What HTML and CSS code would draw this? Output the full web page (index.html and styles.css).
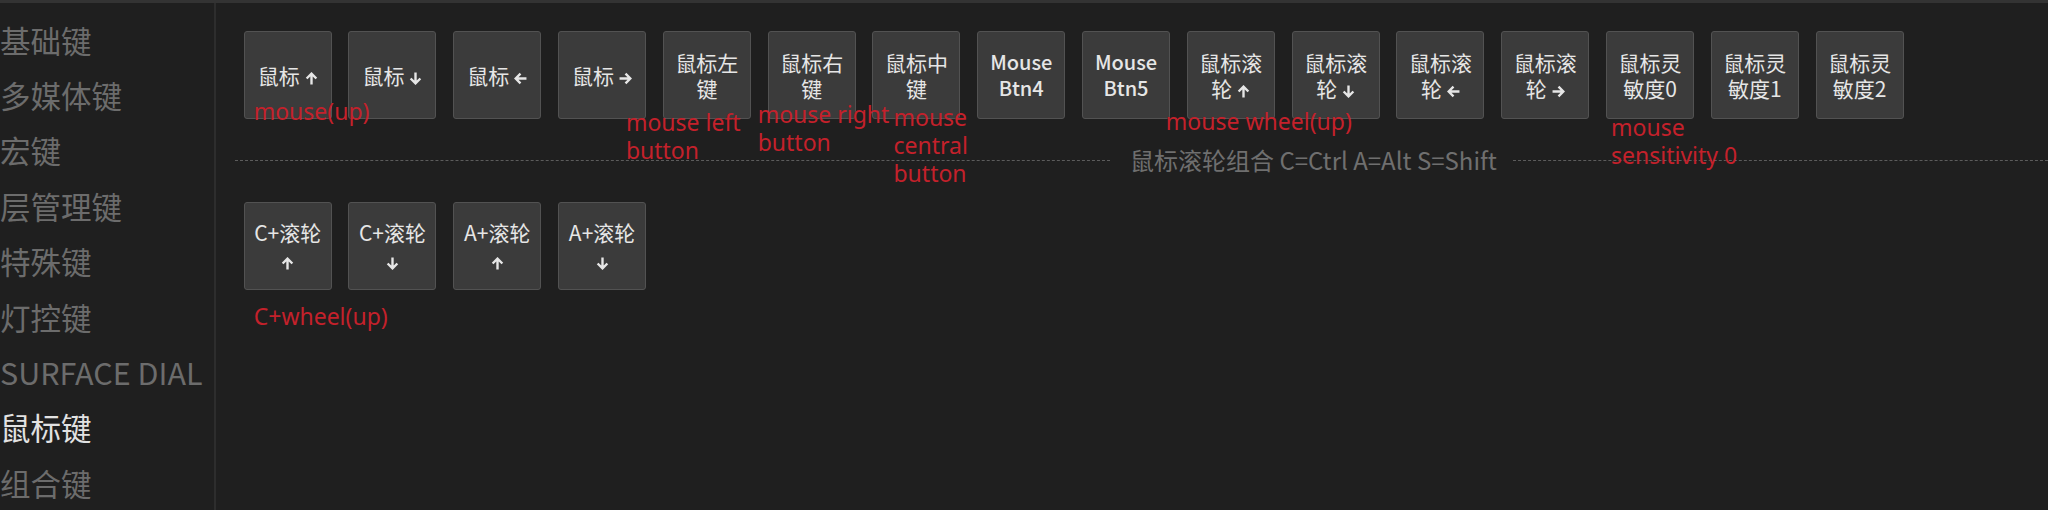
FILE: index.html
```html
<!DOCTYPE html>
<html lang="zh-CN">
<head>
<meta charset="utf-8">
<title>鼠标键</title>
<link rel="stylesheet" href="styles.css">
</head>
<body>
<div class="app">
  <aside class="sidebar">
    <div class="nav-item">基础键</div>
    <div class="nav-item">多媒体键</div>
    <div class="nav-item">宏键</div>
    <div class="nav-item">层管理键</div>
    <div class="nav-item">特殊键</div>
    <div class="nav-item">灯控键</div>
    <div class="nav-item">SURFACE DIAL</div>
    <div class="nav-item active">鼠标键</div>
    <div class="nav-item">组合键</div>
  </aside>
  <main class="content">
    <div class="keys">
      <div class="key"><span class="label">鼠标<svg class="arr" viewBox="0 0 12 12"><path d="M6 11.5V1.5M1.5 6L6 1.5 10.5 6"/></svg></span><span class="note n1">mouse(up)</span></div>
      <div class="key"><span class="label">鼠标<svg class="arr" viewBox="0 0 12 12"><path d="M6 .5v10M1.5 6l4.5 4.5L10.5 6"/></svg></span></div>
      <div class="key"><span class="label">鼠标<svg class="arr" viewBox="0 0 12 12"><path d="M11.5 6H1.5M6 1.5L1.5 6 6 10.5"/></svg></span></div>
      <div class="key"><span class="label">鼠标<svg class="arr" viewBox="0 0 12 12"><path d="M.5 6h10M6 1.5l4.5 4.5L6 10.5"/></svg></span></div>
      <div class="key"><span class="label two">鼠标左<br>键</span><span class="note n5">mouse left<br>button</span></div>
      <div class="key"><span class="label two">鼠标右<br>键</span><span class="note n6">mouse right<br>button</span></div>
      <div class="key"><span class="label two">鼠标中<br>键</span><span class="note n7">mouse<br>central<br>button</span></div>
      <div class="key"><span class="label two latin">Mouse<br>Btn4</span></div>
      <div class="key"><span class="label two latin">Mouse<br>Btn5</span></div>
      <div class="key"><span class="label two">鼠标滚<br>轮<svg class="arr" viewBox="0 0 12 12"><path d="M6 11.5V1.5M1.5 6L6 1.5 10.5 6"/></svg></span><span class="note n10">mouse wheel(up)</span></div>
      <div class="key"><span class="label two">鼠标滚<br>轮<svg class="arr" viewBox="0 0 12 12"><path d="M6 .5v10M1.5 6l4.5 4.5L10.5 6"/></svg></span></div>
      <div class="key"><span class="label two">鼠标滚<br>轮<svg class="arr" viewBox="0 0 12 12"><path d="M11.5 6H1.5M6 1.5L1.5 6 6 10.5"/></svg></span></div>
      <div class="key"><span class="label two">鼠标滚<br>轮<svg class="arr" viewBox="0 0 12 12"><path d="M.5 6h10M6 1.5l4.5 4.5L6 10.5"/></svg></span></div>
      <div class="key"><span class="label two">鼠标灵<br>敏度0</span><span class="note n14">mouse<br>sensitivity 0</span></div>
      <div class="key"><span class="label two">鼠标灵<br>敏度1</span></div>
      <div class="key"><span class="label two">鼠标灵<br>敏度2</span></div>
    </div>
    <div class="divider"><span class="divider-text">鼠标滚轮组合 C=Ctrl A=Alt S=Shift</span></div>
    <div class="keys">
      <div class="key"><span class="label combo">C+滚轮<br><svg class="arr" viewBox="0 0 12 12"><path d="M6 11.5V1.5M1.5 6L6 1.5 10.5 6"/></svg></span><span class="note nc">C+wheel(up)</span></div>
      <div class="key"><span class="label combo">C+滚轮<br><svg class="arr" viewBox="0 0 12 12"><path d="M6 .5v10M1.5 6l4.5 4.5L10.5 6"/></svg></span></div>
      <div class="key"><span class="label combo">A+滚轮<br><svg class="arr" viewBox="0 0 12 12"><path d="M6 11.5V1.5M1.5 6L6 1.5 10.5 6"/></svg></span></div>
      <div class="key"><span class="label combo">A+滚轮<br><svg class="arr" viewBox="0 0 12 12"><path d="M6 .5v10M1.5 6l4.5 4.5L10.5 6"/></svg></span></div>
    </div>
  </main>
</div>
</body>
</html>
```
FILE: styles.css
```css
html, body {
  margin: 0;
  padding: 0;
  background: #1f1f1f;
  overflow: hidden;
}
body {
  width: 2048px;
  height: 510px;
  font-family: "Noto Sans CJK SC", "Noto Sans", sans-serif;
}
.app {
  display: flex;
  height: 507px;
  border-top: 3px solid #333333;
}
.sidebar {
  width: 216px;
  flex: 0 0 216px;
  border-right: 2px solid #2d2d2d;
  padding-top: 9.6px;
  box-sizing: border-box;
  overflow: hidden;
}
.nav-item {
  height: 55.4px;
  line-height: 55.4px;
  font-size: 30.5px;
  color: #6c6c6c;
  white-space: nowrap;
}
.nav-item.active {
  color: #e2e2e2;
}
.content {
  flex: 1;
  padding: 28px 0 0 19px;
  min-width: 0;
}
.keys {
  display: flex;
  gap: 16.8px;
  padding-left: 8.7px;
}
.key {
  position: relative;
  width: 88px;
  height: 88px;
  flex: 0 0 88px;
  box-sizing: border-box;
  background: #3b3b3b;
  border: 1px solid #525252;
  border-radius: 3px;
  display: flex;
  align-items: center;
  justify-content: center;
  text-align: center;
}
.label {
  color: #e6e6e6;
  font-size: 21px;
  line-height: 26px;
  white-space: nowrap;
}
.label.latin {
  font-size: 20px;
  font-weight: 500;
}
.label.combo {
  line-height: 28px;
}
.arr {
  width: 13px;
  height: 13px;
  margin-left: 5px;
  vertical-align: -1px;
  fill: none;
  stroke: #e6e6e6;
  stroke-width: 2.2;
}
.combo .arr {
  margin-left: 0;
}
.note {
  position: absolute;
  z-index: 2;
  font-family: "Noto Sans", sans-serif;
  font-size: 23px;
  line-height: 28px;
  color: #c4212b;
  white-space: nowrap;
  text-align: left;
}
.n1 { left: 9px; top: 65px; }
.n5 { left: -38px; top: 76px; }
.n6 { left: -11px; top: 68px; }
.n7 { left: 20px; top: 71px; }
.n10 { left: -22px; top: 75px; }
.n14 { left: 4px; top: 81px; }
.nc { left: 9px; top: 99px; }
.divider {
  display: flex;
  align-items: center;
  height: 34px;
  margin: 24px 0 25px;
}
.divider::before {
  content: "";
  flex: 0 0 875px;
  border-top: 1px dashed #5c5c5c;
}
.divider::after {
  content: "";
  flex: 1;
  border-top: 1px dashed #5c5c5c;
}
.divider-text {
  padding: 0 16px 0 20px;
  font-size: 24px;
  color: #6f6f6f;
  white-space: nowrap;
  line-height: 34px;
}
```
